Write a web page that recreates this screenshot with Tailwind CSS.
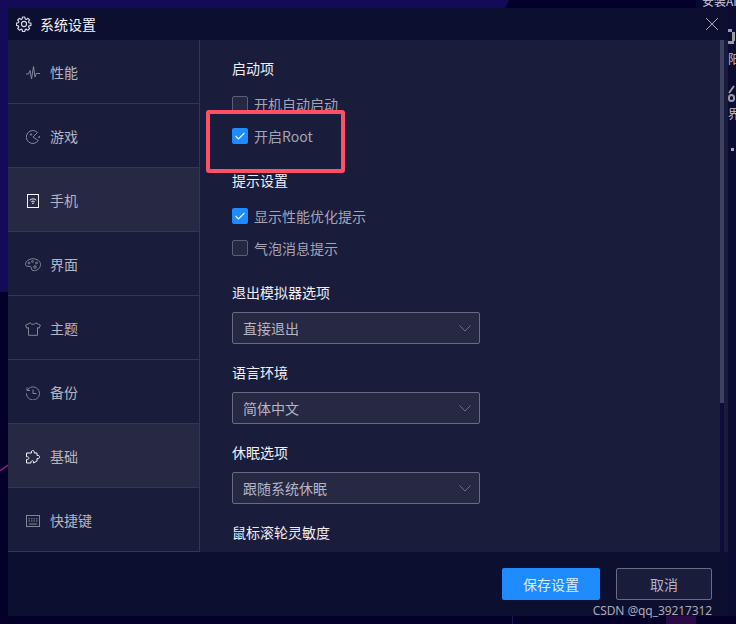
<!DOCTYPE html>
<html lang="zh-CN">
<head>
    <meta charset="UTF-8">
    <title>系统设置</title>
    <script src="https://cdn.jsdelivr.net/npm/@tailwindcss/browser@4"></script>
</head>
<body class="relative w-[736px] h-[624px] overflow-hidden bg-[#05002a] font-['Noto_Sans_CJK_SC','Noto_Sans',sans-serif] text-sm">
    <!-- desktop behind the dialog -->
    <svg class="absolute left-0 top-0" width="512" height="292"><path d="M0 0H509L505 9V292H0z" fill="#150a58"/></svg>
    <div class="absolute right-0 top-0 w-10 h-2 bg-[#0a0a30] overflow-hidden">
        <span class="absolute left-[6px] top-[-7px] text-[#c8c8d4] text-xs leading-4 whitespace-nowrap">安装AI</span>
    </div>
    <div class="absolute right-0 top-2 w-2 h-[608px] bg-[#0c0c32] overflow-hidden text-[#c0c0cc] text-xs">
        <span class="absolute left-0 top-[21px] w-1 h-[3px] bg-[#9a9aa8]"></span>
        <span class="absolute left-[4px] top-[24px] w-[3px] h-[9px] bg-[#9a9aa8]"></span>
        <span class="absolute left-0 top-[33px] w-[6px] h-[3px] bg-[#9a9aa8]"></span>
        <span class="absolute left-0 top-[43px] leading-4 whitespace-nowrap">阳</span>
        <svg class="absolute left-0 top-[77px]" width="8" height="9" fill="none"><path d="M1 8 6 1" stroke="#9a9aa8" stroke-width="2"/></svg>
        <span class="absolute left-0 top-[86px] w-[7px] h-2 rounded-full border-2 border-[#9a9aa8]"></span>
        <span class="absolute left-0 top-[98px] leading-4 whitespace-nowrap">界</span>
        <span class="absolute left-[3px] top-[140px] w-[3px] h-[3px] bg-[#a8a8b4]"></span>
    </div>
    <div class="absolute left-[512px] top-[616px] w-px h-2 bg-[#1c1c55]"></div>
    <div class="absolute left-[666px] top-[616px] w-[30px] h-2 bg-[#2a0a45]"></div>
    <svg class="absolute left-0 top-[460px]" width="8" height="14" fill="none"><path d="M0 11 8 5" stroke="#8a2a78" stroke-width="1.500"/></svg>

    <!-- dialog -->
    <div class="absolute left-2 top-2 w-[720px] h-[608px] flex flex-col bg-[#1a1c3c]">
        <header class="h-8 shrink-0 flex items-center pl-2 pr-2 bg-[#0d0f30]">
            <svg class="w-4 h-4 text-[#d8d8e0]" viewBox="0 0 24 24" fill="none" stroke="currentColor" stroke-width="1.800" stroke-linejoin="round"><path d="M10.300 2.500h3.400l.6 2.900 1.700.7 2.500-1.600 2.400 2.400-1.600 2.500.7 1.700 2.900.6v3.400l-2.900.6-.7 1.700 1.600 2.500-2.400 2.400-2.500-1.600-1.700.7-.6 2.900h-3.400l-.6-2.900-1.700-.7-2.500 1.600-2.400-2.400 1.600-2.500-.7-1.700-2.900-.6v-3.400l2.900-.6.7-1.700-1.600-2.500 2.400-2.400 2.500 1.600 1.700-.7z" transform="translate(-.5 -1)"/><circle cx="12" cy="12" r="3.800"/></svg>
            <span class="ml-2 text-[#f2f2f6]">系统设置</span>
            <svg class="ml-auto w-[14px] h-[14px] text-[#a8a8b8] mr-[1px]" viewBox="0 0 14 14" fill="none" stroke="currentColor" stroke-width="1"><path d="M1 1l12 12M13 1L1 13"/></svg>
        </header>

        <div class="flex-1 flex min-h-0">
            <!-- sidebar -->
            <nav class="w-[192px] shrink-0 border-r border-[#33355a] text-[#b4b4c2]">
                <a class="h-16 flex items-center gap-[10px] pt-[2px] pl-[18px] border-b border-[#33355a]">
                    <svg class="w-[14px] h-[14px] text-[#85859a]" viewBox="0 0 14 14" fill="none" stroke="currentColor" stroke-width="1"><path d="M0 8h2.500L4 4.500 5.500 13 7.500 0.500 9 11l1.300-3.500H14"/></svg>
                    <span class="pb-[2px]">性能</span>
                </a>
                <a class="h-16 flex items-center gap-[10px] pt-[2px] pl-[18px] border-b border-[#33355a]">
                    <svg class="w-[14px] h-[14px] text-[#85859a]" viewBox="0 0 14 14" fill="none" stroke="currentColor" stroke-width="1"><path d="M11.500 2.500A6.500 6.500 0 1 0 12.300 10.500L7 7z"/><circle cx="5" cy="4.500" r=".7" fill="currentColor"/><circle cx="13.300" cy="7" r=".6" fill="currentColor"/></svg>
                    <span class="pb-[2px]">游戏</span>
                </a>
                <a class="h-16 flex items-center gap-[10px] pt-[2px] pl-[18px] border-b border-[#33355a] bg-[#272944]">
                    <svg class="w-[14px] h-[14px] text-[#f4f4f8]" viewBox="0 0 14 14" fill="none" stroke="currentColor"><rect x="1.500" y=".5" width="11" height="13" stroke-width="1"/><path d="M3.800 6.200a4.500 4.500 0 0 1 6.400 0M5.300 7.800a2.400 2.400 0 0 1 3.400 0" stroke-width="1"/><circle cx="7" cy="9.300" r=".8" fill="currentColor" stroke="none"/></svg>
                    <span class="pb-[2px]">手机</span>
                </a>
                <a class="h-16 flex items-center gap-[10px] pt-[2px] pl-[18px] border-b border-[#33355a]">
                    <svg class="w-[16px] h-[14px] -ml-[1px] -mr-[1px] text-[#85859a]" viewBox="0 0 16 14" fill="none" stroke="currentColor" stroke-width="1"><path d="M8 .8C3.800.8.500 3.300.500 6.300c0 2 2 2.200 3.500 2 1.500-.2 2.500.5 2.300 1.700-.2 1.400 1 2.900 3.200 2.700 3.500-.3 6-3 6-6.200C15.500 3.300 12.200.8 8 .8z"/><circle cx="4" cy="5" r=".9"/><circle cx="7.500" cy="3.500" r=".9"/><circle cx="11.500" cy="5" r=".9"/><circle cx="10" cy="9" r="1.300"/></svg>
                    <span class="pb-[2px]">界面</span>
                </a>
                <a class="h-16 flex items-center gap-[10px] pt-[2px] pl-[18px] border-b border-[#33355a]">
                    <svg class="w-[16px] h-[14px] -ml-[1px] -mr-[1px] text-[#85859a]" viewBox="0 0 16 14" fill="none" stroke="currentColor" stroke-width="1" stroke-linejoin="round"><path d="M5.300.8 .6 3.200l1.200 3 1.700-.6v7.700h9V5.600l1.700.6 1.200-3L10.700.8C10.300 2.800 5.700 2.800 5.300.8z"/></svg>
                    <span class="pb-[2px]">主题</span>
                </a>
                <a class="h-16 flex items-center gap-[10px] pt-[2px] pl-[18px] border-b border-[#33355a]">
                    <svg class="w-[14px] h-[14px] text-[#85859a]" viewBox="0 0 14 14" fill="none" stroke="currentColor" stroke-width="1"><path d="M1 1.500v3h3M1.200 4.500A6.500 6.500 0 1 1 .5 7.500"/><path d="M7 3.500V7.500h3.500"/></svg>
                    <span class="pb-[2px]">备份</span>
                </a>
                <a class="h-16 flex items-center gap-[10px] pt-[2px] pl-[18px] border-b border-[#33355a] bg-[#272944]">
                    <svg class="w-[14px] h-[14px] text-[#f4f4f8]" viewBox="0 0 14 14" fill="none" stroke="currentColor" stroke-width="1" stroke-linejoin="round"><path d="M4 3h1.500C5 1 6 .5 6.800.5S8.600 1 8.200 3H11v2.500c2-.5 2.500.5 2.500 1.500S13 9 11 8.500v2.500l-3.500 2c.4-1.500-.2-2.300-1.200-2.300s-1.600 1-1.300 2.300H.5V9.500c1.500.3 2.300-.3 2.300-1.300S2 6.400.5 6.800V3z"/></svg>
                    <span class="pb-[2px]">基础</span>
                </a>
                <a class="h-16 flex items-center gap-[10px] pt-[2px] pl-[18px] border-b border-[#33355a]">
                    <svg class="w-[14px] h-[14px] text-[#85859a]" viewBox="0 0 14 14" fill="none" stroke="currentColor" stroke-width="1"><rect x=".5" y="1.500" width="13" height="11"/><path d="M2.500 4.800h1.500M5 4.800h1.500M7.500 4.800h1.500M10 4.800h1.500M2.500 7h1.500M5 7h1.500M7.500 7h1.500M10 7h1.500M3 10h8"/></svg>
                    <span class="pb-[2px]">快捷键</span>
                </a>
            </nav>

            <!-- settings -->
            <main class="relative flex-1 overflow-hidden pl-8 pt-[19px]">
                <h3 class="h-5 leading-[18px] text-[#eeeef4]">启动项</h3>
                <label class="mt-[15px] h-5 flex items-center gap-[6px] text-[#a4a4b4]">
                    <span class="w-4 h-4 rounded-[2px] border border-[#5c5e78] bg-[#272944]"></span><span>开机自动启动</span>
                </label>
                <label class="mt-3 h-5 flex items-center gap-[6px] text-[#a4a4b4]">
                    <span class="w-4 h-4 rounded-[2px] bg-[#1e8cff] flex items-center justify-center">
                        <svg class="w-3 h-3" viewBox="0 0 12 12" fill="none" stroke="#e8f2ff" stroke-width="1.200"><path d="M1.500 6l3 3 6-6"/></svg>
                    </span><span>开启Root</span>
                </label>
                <h3 class="mt-[25px] h-5 leading-[18px] text-[#eeeef4]">提示设置</h3>
                <label class="mt-[15px] h-5 flex items-center gap-[6px] text-[#a4a4b4]">
                    <span class="w-4 h-4 rounded-[2px] bg-[#1e8cff] flex items-center justify-center">
                        <svg class="w-3 h-3" viewBox="0 0 12 12" fill="none" stroke="#e8f2ff" stroke-width="1.200"><path d="M1.500 6l3 3 6-6"/></svg>
                    </span><span>显示性能优化提示</span>
                </label>
                <label class="mt-3 h-5 flex items-center gap-[6px] text-[#a4a4b4]">
                    <span class="w-4 h-4 rounded-[2px] border border-[#5c5e78] bg-[#272944]"></span><span>气泡消息提示</span>
                </label>
                <h3 class="mt-[25px] h-5 leading-[18px] text-[#eeeef4]">退出模拟器选项</h3>
                <div class="mt-[9px] w-[248px] h-8 flex items-center justify-between pl-[10px] pr-[8px] rounded-[2px] border border-[#6a6a82] bg-[#272944] text-[#b4b4c2]">
                    <span>直接退出</span>
                    <svg class="w-3 h-[7px] text-[#6e6e84]" viewBox="0 0 12 7" fill="none" stroke="currentColor"><path d="M.5.5 6 6l5.500-5.500"/></svg>
                </div>
                <h3 class="mt-[19px] h-5 leading-[18px] text-[#eeeef4]">语言环境</h3>
                <div class="mt-[9px] w-[248px] h-8 flex items-center justify-between pl-[10px] pr-[8px] rounded-[2px] border border-[#6a6a82] bg-[#272944] text-[#b4b4c2]">
                    <span>简体中文</span>
                    <svg class="w-3 h-[7px] text-[#6e6e84]" viewBox="0 0 12 7" fill="none" stroke="currentColor"><path d="M.5.5 6 6l5.500-5.500"/></svg>
                </div>
                <h3 class="mt-[19px] h-5 leading-[18px] text-[#eeeef4]">休眠选项</h3>
                <div class="mt-[9px] w-[248px] h-8 flex items-center justify-between pl-[10px] pr-[8px] rounded-[2px] border border-[#6a6a82] bg-[#272944] text-[#b4b4c2]">
                    <span>跟随系统休眠</span>
                    <svg class="w-3 h-[7px] text-[#6e6e84]" viewBox="0 0 12 7" fill="none" stroke="currentColor"><path d="M.5.5 6 6l5.500-5.500"/></svg>
                </div>
                <h3 class="mt-[19px] h-5 leading-[18px] text-[#eeeef4]">鼠标滚轮灵敏度</h3>
                <!-- scrollbar -->
                <div class="absolute right-1 top-0 bottom-0 w-1 bg-[#0e0c38]">
                    <div class="h-[363px] bg-[#3f4160]"></div>
                </div>
            </main>
        </div>

        <footer class="h-16 shrink-0 flex items-start justify-end gap-4 pt-4 pr-4 bg-[#0d0f30]">
            <button class="w-[98px] h-8 rounded-[2px] bg-[#1e8cff] text-[#dcecff]">保存设置</button>
            <button class="w-24 h-8 rounded-[2px] border border-[#6a6a82] bg-[#1a1c3c] text-[#b4b4c2]">取消</button>
        </footer>
    </div>

    <!-- annotation + watermark on top of the screenshot -->
    <div class="absolute left-[206px] top-[110px] w-[139px] h-[63px] rounded-[3px] border-4 border-[#ff5066]"></div>
    <span class="absolute right-[24px] top-[603px] text-xs leading-4 tracking-[-0.1px] font-['Noto_Sans',sans-serif] text-[#a8a8b8] whitespace-nowrap">CSDN @qq_39217312</span>
</body>
</html>
